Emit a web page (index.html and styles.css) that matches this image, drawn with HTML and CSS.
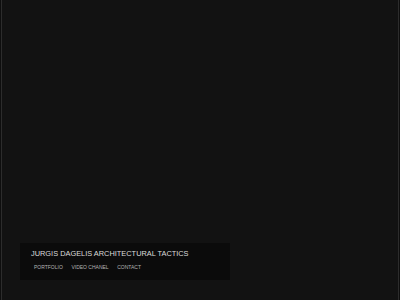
FILE: index.html
```html
<!DOCTYPE html>
<html lang="en">
<head>
  <meta charset="UTF-8">
  <title>Jurgis Dagelis Architectural Tactics</title>
  <link rel="stylesheet" href="styles.css">
</head>
<body>
  <div class="page">
    <div class="caption">
      <h1 class="title">JURGIS DAGELIS ARCHITECTURAL TACTICS</h1>
      <nav class="menu">
        <a href="#">PORTFOLIO</a>
        <a href="#">VIDEO CHANEL</a>
        <a href="#">CONTACT</a>
      </nav>
    </div>
  </div>
</body>
</html>
```

FILE: styles.css
```css
html, body { margin: 0; height: 100%; }
body { background: #0e0e0e; font-family: "Liberation Sans", Arial, sans-serif; }
.page {
  height: 300px;
  box-sizing: border-box;
  margin: 0 1px;
  border-left: 1px solid #2c2c2c;
  border-right: 1px solid #2c2c2c;
  background: #121212;
  display: flex;
  flex-direction: column;
  justify-content: flex-end;
  padding: 0 0 20px 18px;
}
.caption {
  width: 210px;
  height: 37px;
  box-sizing: border-box;
  background: #0b0b0b;
  padding: 6px 0 0 11px;
}
.title {
  margin: 0;
  font-size: 7.4px;
  line-height: 9px;
  font-weight: normal;
  color: #dcdcdc;
}
.menu {
  display: flex;
  gap: 8.6px;
  margin: 6px 0 0 3px;
  font-size: 5px;
  line-height: 6px;
}
.menu a { color: #b4b4b4; text-decoration: none; }
```
